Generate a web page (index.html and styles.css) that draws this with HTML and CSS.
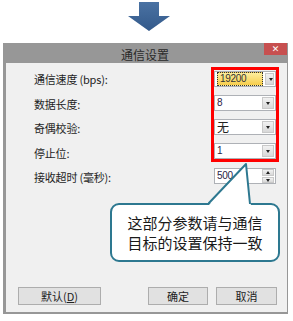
FILE: index.html
```html
<!DOCTYPE html>
<html lang="zh-CN">
<head>
    <meta charset="UTF-8">
    <title>通信设置</title>
    <link rel="stylesheet" href="styles.css">
</head>
<body>
    <svg class="arrow" width="293" height="43" viewBox="0 0 293 43">
        <defs>
            <linearGradient id="arrowFill" x1="0" y1="0" x2="0" y2="1">
                <stop offset="0" stop-color="#4a72a3"/>
                <stop offset="1" stop-color="#33598a"/>
            </linearGradient>
        </defs>
        <polygon points="139,2 159,2 159,16 170,16 149,31 128,16 139,16" fill="url(#arrowFill)"/>
    </svg>

    <div class="dialog">
        <div class="titlebar">
            <span class="title">通信设置</span>
            <span class="close">&#x2715;</span>
        </div>
        <div class="content">
            <div class="form">
                <div class="labels">
                    <div class="label">通信速度 (bps):</div>
                    <div class="label">数据长度:</div>
                    <div class="label">奇偶校验:</div>
                    <div class="label">停止位:</div>
                    <div class="label">接收超时 (毫秒):</div>
                </div>
                <div class="controls">
                    <div class="mark">
                        <div class="combo">
                            <span class="value selected">19200</span>
                            <span class="drop"></span>
                        </div>
                        <div class="combo">
                            <span class="value">8</span>
                            <span class="drop"></span>
                        </div>
                        <div class="combo">
                            <span class="value cjk">无</span>
                            <span class="drop"></span>
                        </div>
                        <div class="combo">
                            <span class="value">1</span>
                            <span class="drop"></span>
                        </div>
                    </div>
                    <div class="spin">
                        <span class="value">500</span>
                        <span class="spin-buttons">
                            <span class="up"></span>
                            <span class="down"></span>
                        </span>
                    </div>
                </div>
            </div>

            <div class="buttons">
                <button class="btn btn-default">默认(<u>D</u>)</button>
                <button class="btn btn-ok">确定</button>
                <button class="btn btn-cancel">取消</button>
            </div>

            <div class="bubble">
                这部分参数请与通信<br>目标的设置保持一致
            </div>
            <svg class="pointer" width="50" height="46" viewBox="0 0 50 46">
                <polygon points="38,2 43,44 0,44" fill="#fff"/>
                <polyline points="0,42 38,2 42,42" fill="none" stroke="#2d7890" stroke-width="2" stroke-linejoin="round"/>
            </svg>
        </div>
    </div>
</body>
</html>
```

FILE: styles.css
```css
body {
    margin: 0;
    background: #fff;
    font-family: "Noto Sans CJK SC", "Liberation Sans", sans-serif;
    color: #222;
}
.arrow {
    display: block;
}
.dialog {
    margin-left: 3px;
    width: 281px;
    padding: 0 1px 2px 3px;
    background: #979797;
}
.titlebar {
    position: relative;
    height: 20px;
    line-height: 20px;
    text-align: center;
}
.title {
    font-size: 12px;
    color: #2a2a2a;
    margin-left: -3px;
}
.close {
    position: absolute;
    top: 0;
    right: 0;
    width: 23px;
    height: 12px;
    line-height: 12px;
    background: #c75050;
    color: #fff;
    font-size: 9px;
    font-weight: bold;
    font-family: "DejaVu Sans", sans-serif;
}
.content {
    position: relative;
    height: 249px;
    background: #f0f0f0;
    display: flex;
    flex-direction: column;
}
.form {
    display: flex;
}
.labels {
    padding: 4px 0 0 28px;
}
.label {
    height: 24.5px;
    line-height: 24.5px;
    font-size: 11px;
    letter-spacing: -0.2px;
    color: #1e1e1e;
}
.controls {
    margin: 4px 8px 0 auto;
}
.mark {
    width: 62px;
    padding: 1px 0 0;
    border: 3px solid #ff0000;
    display: flex;
    flex-direction: column;
    gap: 8px;
}
.combo, .spin {
    position: relative;
    box-sizing: border-box;
    height: 16px;
    background: #fff;
    border: 1px solid #aeb1b6;
    display: flex;
    align-items: center;
}
.value {
    flex: 1;
    padding-left: 2px;
    font-size: 10px;
    line-height: 12px;
    letter-spacing: -0.3px;
    font-family: "Liberation Sans", sans-serif;
    color: #2a2346;
}
.value.cjk {
    font-family: "Noto Sans CJK SC", sans-serif;
    font-size: 12px;
    letter-spacing: 0;
    color: #222;
}
.value.selected {
    flex: none;
    width: 42px;
    margin-left: 2px;
    padding-left: 2px;
    border: 1px dotted #333;
    background: linear-gradient(#fdee9e, #f7cd4c);
    color: #333;
}
.drop {
    width: 12px;
    height: 12px;
    margin-right: 1px;
    margin-left: 2px;
    box-sizing: border-box;
    border: 1px solid #c9c9c9;
    background: linear-gradient(#f2f2f2, #d8d8d8);
    position: relative;
}
.drop::after {
    content: "";
    position: absolute;
    left: 3px;
    top: 4px;
    border-left: 2.5px solid transparent;
    border-right: 2.5px solid transparent;
    border-top: 3px solid #222;
}
.spin {
    width: 62px;
    margin: 6px 0 0 3px;
}
.spin-buttons {
    width: 12px;
    height: 14px;
    margin-right: 1px;
    display: flex;
    flex-direction: column;
    gap: 1px;
}
.up, .down {
    flex: 1;
    box-sizing: border-box;
    border: 1px solid #c9c9c9;
    background: linear-gradient(#f2f2f2, #d8d8d8);
    position: relative;
}
.up::after, .down::after {
    content: "";
    position: absolute;
    left: 3px;
    top: 1px;
    border-left: 2.5px solid transparent;
    border-right: 2.5px solid transparent;
}
.up::after {
    border-bottom: 3px solid #222;
}
.down::after {
    border-top: 3px solid #222;
}
.buttons {
    margin-top: auto;
    padding: 0 0 7px 12px;
    display: flex;
}
.btn {
    height: 18px;
    padding: 0;
    background: #e1e1e1;
    border: 1px solid #adadad;
    font-family: "Noto Sans CJK SC", sans-serif;
    font-size: 11px;
    line-height: 16px;
    color: #222;
}
.btn-default {
    width: 83px;
}
.btn-ok {
    width: 60px;
    margin-left: 47px;
}
.btn-cancel {
    width: 61px;
    margin-left: 8px;
}
.bubble {
    position: absolute;
    left: 104px;
    top: 140px;
    width: 166px;
    height: 55px;
    border: 2px solid #2d7890;
    border-radius: 9px;
    background: #fff;
    font-size: 15px;
    line-height: 20px;
    text-align: center;
    display: flex;
    align-items: center;
    justify-content: center;
    color: #1a1a1a;
}
.pointer {
    position: absolute;
    left: 202px;
    top: 99px;
}
```
